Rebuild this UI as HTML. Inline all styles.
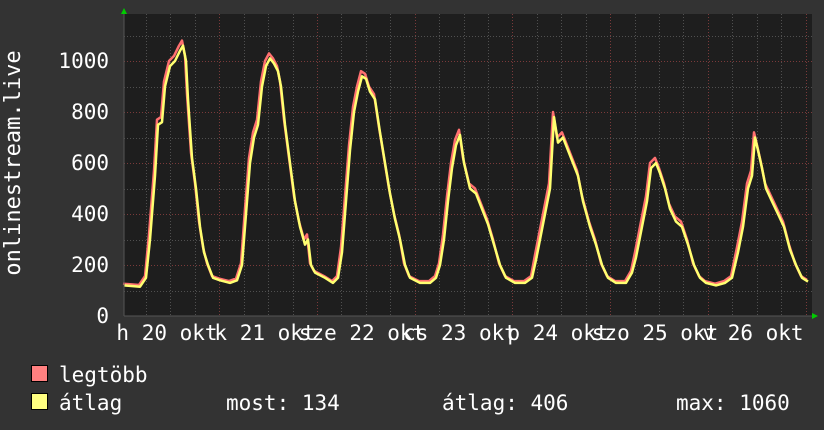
<!DOCTYPE html>
<html><head><meta charset="utf-8"><style>
html,body{margin:0;padding:0;background:#333;}
svg{display:block}
text{font-family:"DejaVu Sans Mono","Liberation Mono",monospace;fill:#fff;font-size:21px}
</style></head><body>
<svg id="s" width="824" height="430" xmlns="http://www.w3.org/2000/svg">
<rect width="824" height="430" fill="#333"/>
<rect x="124" y="14" width="688" height="302" fill="#1e1e1e"/>
<g id="grid"></g>
<g id="curves"></g>
<line x1="124" y1="14" x2="124" y2="316" stroke="#555" stroke-width="1"/>
<line x1="124" y1="316" x2="812" y2="316" stroke="#555" stroke-width="1"/>
<polygon points="121,14 127,14 124,8" fill="#00cc00"/>
<polygon points="812,313 812,319 818,316" fill="#00cc00"/>
<g text-anchor="end">
<text x="109" y="68">1000</text>
<text x="109" y="119">800</text>
<text x="109" y="170">600</text>
<text x="109" y="221">400</text>
<text x="109" y="272">200</text>
<text x="109" y="323">0</text>
</g>
<text transform="translate(20,163) rotate(-90)" text-anchor="middle" style="font-size:22px">onlinestream.live</text>
<g text-anchor="middle">
<text x="167" y="340">h 20 okt</text>
<text x="265" y="340">k 21 okt</text>
<text x="362" y="340">sze 22 okt</text>
<text x="460" y="340">cs 23 okt</text>
<text x="558" y="340">p 24 okt</text>
<text x="655" y="340">szo 25 okt</text>
<text x="753" y="340">v 26 okt</text>
</g>
<rect x="31.5" y="365.5" width="16" height="16" fill="#ff8080" stroke="#000"/>
<rect x="31.5" y="393.5" width="16" height="16" fill="#ffff80" stroke="#000"/>
<text x="59" y="382">legtöbb</text>
<text x="59" y="410">átlag</text>
<text x="226" y="410">most: 134</text>
<text x="442" y="410">átlag: 406</text>
<text x="676" y="410">max: 1060</text>
</svg>
<script>
var NS="http://www.w3.org/2000/svg";
var g=document.getElementById('grid'),c=document.getElementById('curves');
function ln(x1,y1,x2,y2,col){var l=document.createElementNS(NS,'line');l.setAttribute('x1',x1);l.setAttribute('y1',y1);l.setAttribute('x2',x2);l.setAttribute('y2',y2);l.setAttribute('stroke',col);l.setAttribute('stroke-dasharray','1,2');l.setAttribute('stroke-width','1');g.appendChild(l);}
for(var v=100;v<=1100;v+=100){var y=Math.round(316-v*0.255)+0.5;ln(124,y,812,y,v%200==0?'#7a3a3a':'#505050');}
for(var i=0;i<30;i++){var x=Math.round(146+i*24.43)+0.5;if(x>812)break;var maj=Math.abs(((x-219)/97.7)-Math.round((x-219)/97.7))<0.05;ln(x,14,x,316,maj?'#7a3a3a':'#505050');}
var d=[[124,120],[140,115],[146,150],[150,300],[155,550],[158,750],[162,760],[165,900],[170,980],[175,1000],[180,1040],[183,1060],[186,1000],[188,850],[192,620],[196,500],[200,350],[204,250],[208,200],[213,150],[220,140],[230,130],[237,140],[242,200],
[246,400],[250,600],[254,700],[258,750],[262,900],[266,980],[270,1010],[274,990],[278,960],[281,900],[285,750],[290,600],[295,450],[300,350],[305,280],[308,300],[311,200],[315,170],[325,150],[333,130],[338,150],[342,250],
[346,450],[350,650],[354,800],[358,880],[362,940],[366,930],[370,880],[375,850],[380,720],[385,600],[390,480],[395,380],[400,300],[405,200],[410,150],[420,130],[430,130],[436,150],[440,200],
[444,300],[448,450],[452,580],[456,670],[460,710],[464,600],[470,500],[476,480],[482,420],[488,360],[494,280],[500,200],[506,150],[515,130],[525,130],[532,150],[536,220],
[540,300],[545,400],[550,500],[554,780],[558,680],[563,700],[568,650],[573,600],[578,550],[583,450],[590,350],[596,280],[602,200],[608,150],[616,130],[626,130],[632,170],
[636,230],[642,350],[647,450],[651,580],[656,600],[660,560],[665,500],[670,420],[676,370],[682,350],[688,280],[694,200],[700,150],[706,130],[716,120],[725,130],[732,150],
[738,250],[743,350],[748,500],[752,550],[755,700],[758,650],[762,580],[766,500],[772,450],[778,400],[784,350],[790,260],[796,200],[802,150],[808,135]];
function pl(dx,dv,col){var p=d.map(function(a){return (a[0]+dx)+','+(316-(a[1]+(a[1]>200?dv:dv/3))*0.255).toFixed(1)}).join(' ');var e=document.createElementNS(NS,'polyline');e.setAttribute('points',p);e.setAttribute('fill','none');e.setAttribute('stroke',col);e.setAttribute('stroke-width','2.5');e.setAttribute('stroke-linejoin','round');c.appendChild(e);}
pl(-1,20,'#ff7070');pl(0,0,'#ffff70');
</script>
</body></html>
